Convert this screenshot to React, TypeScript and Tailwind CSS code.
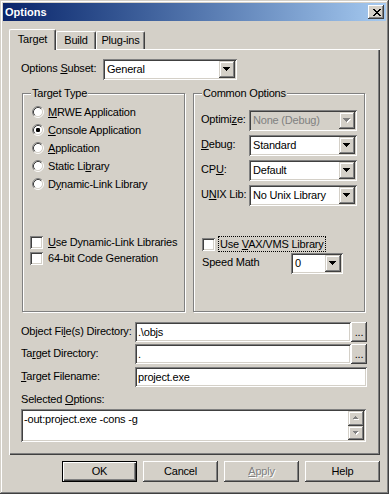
import React from "react";

const raised =
  "shadow-[inset_-1px_-1px_#404040,inset_1px_1px_#ffffff,inset_-2px_-2px_#808080,inset_2px_2px_#d4d0c8]";
const raisedSmall =
  "shadow-[inset_-1px_-1px_#404040,inset_1px_1px_#d4d0c8,inset_-2px_-2px_#808080,inset_2px_2px_#ffffff]";
const sunken =
  "shadow-[inset_1px_1px_#808080,inset_-1px_-1px_#ffffff,inset_2px_2px_#404040,inset_-2px_-2px_#d4d0c8]";

function Arrow({ down = true, disabled = false, small = false }: { down?: boolean; disabled?: boolean; small?: boolean }) {
  const rows = small ? [[0, 5], [1, 3], [2, 1]] : [[0, 7], [1, 5], [2, 3], [3, 1]];
  const n = rows.length;
  const fill = disabled ? "#808080" : "#000000";
  const w = rows[0][1] + 1;
  return (
    <svg width={w} height={n + 1} viewBox={`0 0 ${w} ${n + 1}`} shapeRendering="crispEdges">
      {disabled &&
        rows.map(([o, rw], i) => (
          <rect key={"s" + i} x={o + 1} y={(down ? i : n - 1 - i) + 1} width={rw} height={1} fill="#ffffff" />
        ))}
      {rows.map(([o, rw], i) => (
        <rect key={i} x={o} y={down ? i : n - 1 - i} width={rw} height={1} fill={fill} />
      ))}
    </svg>
  );
}

function Combo({ className, value, disabled = false }: { className: string; value: string; disabled?: boolean }) {
  return (
    <div className={`${className} flex h-[21px] shrink-0 p-[2px] ${sunken} ${disabled ? "bg-[#d4d0c8]" : "bg-white"}`}>
      <div className={`flex flex-1 items-center overflow-hidden whitespace-nowrap pl-[2px] ${disabled ? "text-[#808080]" : ""}`}>
        {value}
      </div>
      <div className={`flex w-[16px] items-center justify-center bg-[#d4d0c8] ${raisedSmall}`}>
        <Arrow disabled={disabled} />
      </div>
    </div>
  );
}

function Edit({ className, value }: { className: string; value: string }) {
  return (
    <div className={`${className} flex h-[20px] shrink-0 items-center bg-white pl-[3px] pt-[1px] ${sunken}`}>
      {value}
    </div>
  );
}

function Radio({ checked = false }: { checked?: boolean }) {
  return (
    <svg width="12" height="12" viewBox="0 0 12 12" className="shrink-0">
      <circle cx="6" cy="6" r="4.5" fill="#ffffff" />
      <path d="M2.11 9.89A5.5 5.5 0 0 1 9.89 2.11" stroke="#808080" fill="none" />
      <path d="M9.89 2.11A5.5 5.5 0 0 1 2.11 9.89" stroke="#ffffff" fill="none" />
      <path d="M2.82 9.18A4.5 4.5 0 0 1 9.18 2.82" stroke="#404040" fill="none" />
      <path d="M9.18 2.82A4.5 4.5 0 0 1 2.82 9.18" stroke="#d4d0c8" fill="none" />
      {checked && <rect x="4" y="4" width="4" height="4" rx="1.2" fill="#000000" />}
    </svg>
  );
}

function Check() {
  return <div className={`h-[13px] w-[13px] shrink-0 bg-white ${sunken}`} />;
}

function Group({ label, className, children }: { label: string; className: string; children: React.ReactNode }) {
  return (
    <div className={`relative border border-[#808080] shadow-[inset_1px_1px_#ffffff,1px_1px_#ffffff] ${className}`}>
      <span className="absolute left-[8px] top-[-7px] bg-[#d4d0c8] px-[1px] leading-[13px]">{label}</span>
      {children}
    </div>
  );
}

function RadioRow({ checked = false, children }: { checked?: boolean; children: React.ReactNode }) {
  return (
    <div className="flex h-[18px] items-center gap-[4px] pl-[9px]">
      <Radio checked={checked} />
      <span>{children}</span>
    </div>
  );
}

function Button({ children, isDefault = false, disabled = false }: { children: React.ReactNode; isDefault?: boolean; disabled?: boolean }) {
  return (
    <div
      className={`flex h-[21px] w-[75px] items-center justify-center bg-[#d4d0c8] ${
        isDefault
          ? "border border-black shadow-[inset_1px_1px_#ffffff,inset_-1px_-1px_#404040,inset_-2px_-2px_#808080]"
          : raised
      } ${disabled ? "text-[#808080] [text-shadow:1px_1px_0_#ffffff]" : ""}`}
    >
      <span>{children}</span>
    </div>
  );
}

function CloseGlyph() {
  const rows: [number, number][][] = [
    [[0, 2], [6, 2]],
    [[1, 2], [5, 2]],
    [[2, 4]],
    [[3, 2]],
    [[2, 4]],
    [[1, 2], [5, 2]],
    [[0, 2], [6, 2]],
  ];
  return (
    <svg width="8" height="7" viewBox="0 0 8 7" shapeRendering="crispEdges">
      {rows.map((segs, y) => segs.map(([x, w], i) => <rect key={y + "-" + i} x={x} y={y} width={w} height={1} fill="#000" />))}
    </svg>
  );
}

export default function App() {
  return (
    <div className="h-[494px] w-[389px] bg-[#d4d0c8] font-['Liberation_Sans',Arial,sans-serif] text-[11px] leading-[13px] tracking-[-0.2px] text-black">
      <div className="flex h-full w-full flex-col p-[3px] shadow-[inset_-1px_-1px_#404040,inset_1px_1px_#d4d0c8,inset_-2px_-2px_#808080,inset_2px_2px_#ffffff]">
        {/* Title bar */}
        <div className="flex h-[18px] shrink-0 items-center bg-linear-to-r from-[#0a246a] to-[#a6caf0] pl-[2px]">
          <span className="font-bold tracking-normal text-white">Options</span>
          <div className={`ml-auto mr-[2px] flex h-[14px] w-[16px] items-center justify-center bg-[#d4d0c8] pl-[1px] ${raised}`}>
            <CloseGlyph />
          </div>
        </div>

        <div className="flex flex-1 flex-col px-[6px] pt-[8px]">
          {/* Tabs */}
          <div className="flex h-[20px] items-end">
            <div className="relative z-10 -mb-[1px] flex h-[21px] w-[47px] items-center justify-center rounded-t-[2px] border-l border-r border-t border-white border-r-[#404040] bg-[#d4d0c8] pb-[2px] shadow-[inset_-1px_0_#808080]">
              Target
            </div>
            <div className="flex h-[18px] w-[40px] items-center justify-center rounded-t-[2px] border-l border-r border-t border-white border-r-[#404040] bg-[#d4d0c8] shadow-[inset_-1px_0_#808080]">
              Build
            </div>
            <div className="flex h-[18px] w-[49px] items-center justify-center rounded-t-[2px] border-l border-r border-t border-white border-r-[#404040] bg-[#d4d0c8] shadow-[inset_-1px_0_#808080]">
              Plug-ins
            </div>
          </div>

          {/* Panel */}
          <div className="h-[406px] bg-[#d4d0c8] pl-[12px] pt-[10px] shadow-[inset_1px_1px_#ffffff,inset_-1px_-1px_#404040,inset_-2px_-2px_#808080]">
            <div className="flex h-[21px] items-center">
              <span className="w-[82px] pb-[2px]">
                Options <u>S</u>ubset:
              </span>
              <Combo className="w-[134px]" value="General" />
            </div>

            <div className="ml-[1px] mt-[13px] flex gap-[8px]">
              <Group label="Target Type" className="h-[219px] w-[163px] pt-[9px]">
                <RadioRow>
                  <u>M</u>RWE Application
                </RadioRow>
                <RadioRow checked>
                  <u>C</u>onsole Application
                </RadioRow>
                <RadioRow>
                  <u>A</u>pplication
                </RadioRow>
                <RadioRow>
                  Static Li<u>b</u>rary
                </RadioRow>
                <RadioRow>
                  D<u>y</u>namic-Link Library
                </RadioRow>
                <div className="mt-[41px] flex h-[16px] items-center gap-[5px] pl-[7px]">
                  <Check />
                  <span>
                    <u>U</u>se Dynamic-Link Libraries
                  </span>
                </div>
                <div className="flex h-[16px] items-center gap-[5px] pl-[7px]">
                  <Check />
                  <span>64-bit Code Generation</span>
                </div>
              </Group>

              <Group label="Common Options" className="h-[219px] w-[172px] pt-[16px]">
                <div className="flex flex-col gap-[4px] pl-[7px]">
                  <div className="flex h-[21px] items-center">
                    <span className="w-[48px] pb-[2px]">
                      Optimi<u>z</u>e:
                    </span>
                    <Combo className="w-[108px]" value="None (Debug)" disabled />
                  </div>
                  <div className="flex h-[21px] items-center">
                    <span className="w-[48px] pb-[2px]">
                      <u>D</u>ebug:
                    </span>
                    <Combo className="w-[108px]" value="Standard" />
                  </div>
                  <div className="flex h-[21px] items-center">
                    <span className="w-[48px] pb-[2px]">
                      CP<u>U</u>:
                    </span>
                    <Combo className="w-[108px]" value="Default" />
                  </div>
                  <div className="flex h-[21px] items-center">
                    <span className="w-[48px] pb-[2px]">
                      U<u>N</u>IX Lib:
                    </span>
                    <Combo className="w-[108px]" value="No Unix Library" />
                  </div>
                </div>
                <div className="mt-[30px] flex h-[16px] items-center gap-[3px] pl-[8px]">
                  <Check />
                  <div className="flex h-[16px] items-center border border-dotted border-black px-[1px]">
                    <span>
                      Use <u>V</u>AX/VMS Library
                    </span>
                  </div>
                </div>
                <div className="mt-[1px] flex h-[21px] items-center pl-[8px]">
                  <span className="w-[89px] pb-[2px]">Speed Math</span>
                  <Combo className="w-[52px]" value="0" />
                </div>
              </Group>
            </div>

            <div className="mt-[10px] flex h-[20px] items-center">
              <span className="w-[114px] pb-[2px]">
                Object Fi<u>l</u>e(s) Directory:
              </span>
              <Edit className="w-[216px]" value={".\\objs"} />
              <div className={`flex h-[20px] w-[16px] items-end justify-center bg-[#d4d0c8] pb-[3px] ${raised}`}>...</div>
            </div>
            <div className="mt-[2px] flex h-[20px] items-center">
              <span className="w-[114px] pb-[2px]">
                Ta<u>r</u>get Directory:
              </span>
              <Edit className="w-[216px]" value="." />
              <div className={`flex h-[20px] w-[16px] items-end justify-center bg-[#d4d0c8] pb-[3px] ${raised}`}>...</div>
            </div>
            <div className="mt-[3px] flex h-[20px] items-center">
              <span className="w-[114px] pb-[2px]">
                <u>T</u>arget Filename:
              </span>
              <Edit className="w-[232px]" value="project.exe" />
            </div>
            <div className="mt-[5px] h-[14px] leading-[14px]">
              Selected <u>O</u>ptions:
            </div>
            <div className={`mt-[3px] flex h-[33px] w-[345px] bg-white p-[2px] ${sunken}`}>
              <div className="flex-1 pl-[1px] pt-[2px]">-out:project.exe -cons -g</div>
              <div className="flex w-[16px] flex-col">
                <div className={`flex flex-1 items-center justify-center bg-[#d4d0c8] ${raisedSmall}`}>
                  <Arrow down={false} disabled small />
                </div>
                <div className={`flex flex-1 items-center justify-center bg-[#d4d0c8] ${raisedSmall}`}>
                  <Arrow disabled small />
                </div>
              </div>
            </div>
          </div>

          {/* Buttons */}
          <div className="mt-[6px] flex justify-end gap-[6px]">
            <Button isDefault>OK</Button>
            <Button>Cancel</Button>
            <Button disabled>
              <u>A</u>pply
            </Button>
            <Button>Help</Button>
          </div>
        </div>
      </div>
    </div>
  );
}
